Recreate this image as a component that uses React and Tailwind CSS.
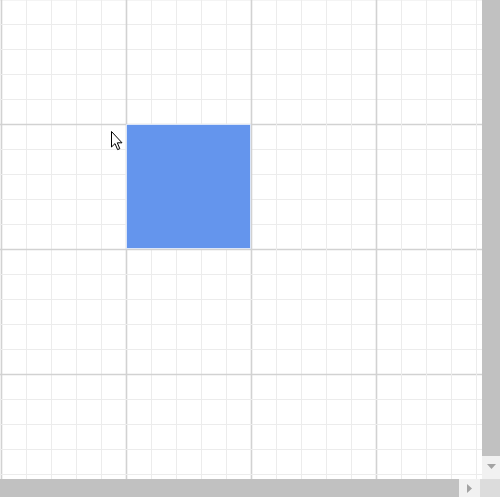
import React from "react";

function Grid() {
  const w = 482;
  const h = 479;
  const lines = [];
  for (let k = 0; k < 20; k++) {
    const x = 1.5 + 25 * k;
    if (x < w) {
      lines.push(
        <line key={"v" + k} x1={x} y1={0} x2={x} y2={h} stroke={k % 5 === 0 ? "#d2d2d2" : "#ececec"} strokeWidth={k % 5 === 0 ? 1.6 : 1} />
      );
    }
    const y = -0.5 + 25 * k;
    if (y < h) {
      lines.push(
        <line key={"h" + k} x1={0} y1={y} x2={w} y2={y} stroke={k % 5 === 0 ? "#d2d2d2" : "#ececec"} strokeWidth={k % 5 === 0 ? 1.6 : 1} />
      );
    }
  }
  return (
    <svg width={w} height={h} className="absolute left-0 top-0">
      {lines}
    </svg>
  );
}

export default function App() {
  return (
    <div className="w-[500px] h-[500px] bg-white flex flex-col overflow-hidden">
      <div className="flex h-[479px]">
        <div className="relative w-[482px] h-[479px] overflow-hidden bg-white">
          <Grid />
          <div className="absolute left-[126px] top-[124px] w-[125px] h-[125px] bg-[#6495ed] border border-[#dce6f8]" />
          <svg className="absolute left-[110px] top-[130px]" width="14" height="22" viewBox="0 0 14 22">
            <path d="M1.5 1.5 L1.5 17 L5 13.6 L7.6 19.6 L9.8 18.7 L7.3 12.8 L12 12.8 Z" fill="white" stroke="black" strokeWidth="1" strokeLinejoin="miter" />
          </svg>
        </div>
        <div className="w-[18px] h-[479px] bg-[#f1f1f1] flex flex-col">
          <div className="h-[456px] bg-[#c1c1c1]" />
          <div className="flex-1 flex items-start justify-center pt-[8px]">
            <svg width="9" height="5" viewBox="0 0 9 5">
              <path d="M0 0 L9 0 L4.5 5 Z" fill="#a3a3a3" />
            </svg>
          </div>
        </div>
      </div>
      <div className="flex h-[18px]">
        <div className="w-[459px] bg-[#c1c1c1]" />
        <div className="w-[21px] bg-[#f1f1f1] flex items-center justify-start pl-[8px]">
          <svg width="5" height="9" viewBox="0 0 5 9">
            <path d="M0 0 L5 4.5 L0 9 Z" fill="#a3a3a3" />
          </svg>
        </div>
        <div className="flex-1 bg-[#dcdcdc]" />
      </div>
      <div className="flex-1 bg-white" />
    </div>
  );
}
